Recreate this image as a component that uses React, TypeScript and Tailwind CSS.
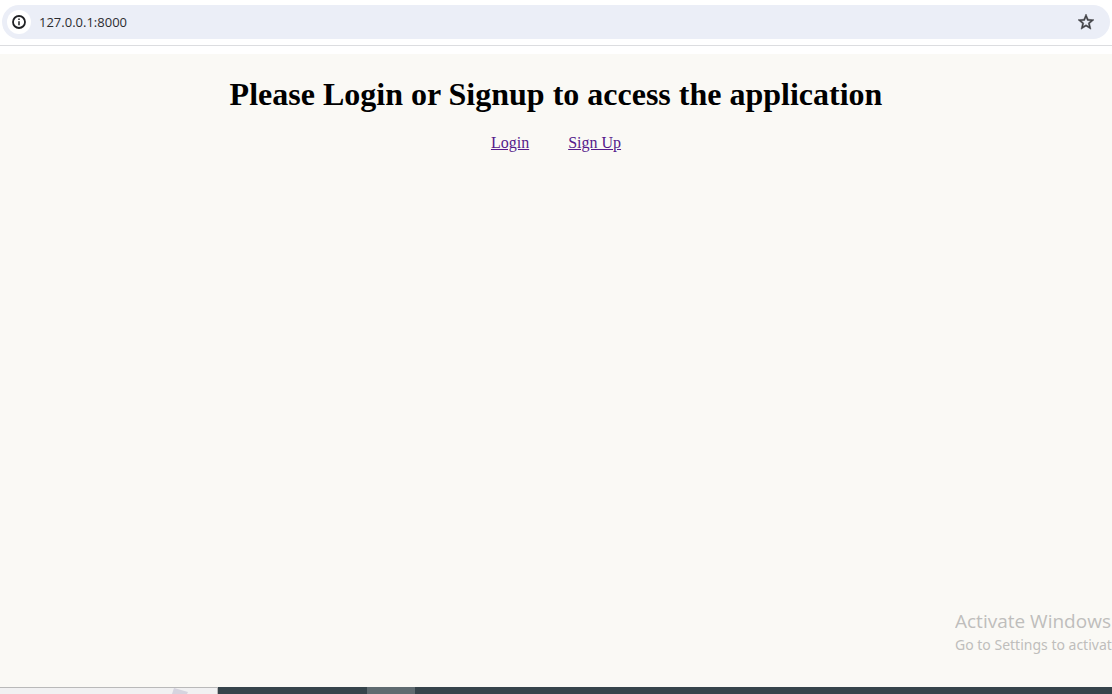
import React from "react";

function AddressBar() {
  return (
    <header className="border-b border-[#dcdde0] bg-white pt-[5px] pb-[6px] pl-[2px] pr-[2px]">
      <div className="flex h-[34px] items-center rounded-full bg-[#ebeef7] pl-[5px] pr-4">
        <button
          type="button"
          aria-label="View site information"
          className="flex size-6 shrink-0 items-center justify-center rounded-full bg-white"
        >
          <svg viewBox="0 0 14 14" className="size-[14px]" fill="none">
            <circle cx="7" cy="7" r="6" stroke="#1f2023" strokeWidth="1.8" />
            <path d="M7 6.2v4M7 3.6v1.5" stroke="#1f2023" strokeWidth="1.5" />
          </svg>
        </button>
        <input
          type="text"
          aria-label="Address"
          defaultValue="127.0.0.1:8000"
          className="ml-2 min-w-0 flex-1 bg-transparent font-['Open_Sans',sans-serif] text-[13px] leading-5 text-[#2b2c30] outline-none"
        />
        <button type="button" aria-label="Bookmark this page" className="shrink-0">
          <svg viewBox="2 2 20 20" className="size-4" fill="#3f4044" stroke="#3f4044" strokeWidth="0.6">
            <path d="M22 9.24l-7.19-.62L12 2 9.19 8.63 2 9.24l5.46 4.73L5.82 21 12 17.27 18.18 21l-1.63-7.03L22 9.24zM12 15.4l-3.76 2.27 1-4.28-3.32-2.88 4.38-.38L12 6.1l1.71 4.04 4.38.38-3.32 2.88 1 4.28L12 15.4z" />
          </svg>
        </button>
      </div>
    </header>
  );
}

function ActivationNotice() {
  return (
    <aside className="flex w-[157px] flex-col self-end overflow-hidden pb-8 whitespace-nowrap text-[#bfbebc]">
      <p className="font-['Open_Sans',sans-serif] text-[19px] leading-7">Activate Windows</p>
      <p className="font-['Noto_Sans',sans-serif] text-[14px] leading-5">Go to Settings to activat</p>
    </aside>
  );
}

function Taskbar() {
  return (
    <footer className="flex h-[7px] bg-[#36444b]">
      <div className="flex w-[218px] justify-end overflow-hidden border-t border-r border-[#b9b9b9] bg-[#f1f1f2] pr-7">
        <svg viewBox="0 0 18 6" className="h-[6px] w-[18px]">
          <path d="M3 0L17 4L16 6H1Z" fill="#d6d4df" />
        </svg>
      </div>
      <div className="ml-[149px] w-12 bg-[#5f6b70]" />
    </footer>
  );
}

export default function App() {
  return (
    <div className="flex min-h-screen flex-col bg-white">
      <AddressBar />
      <main className="mt-2 flex flex-1 flex-col bg-[#faf9f5] font-['Liberation_Serif',serif]">
        <h1 className="pt-[22px] text-center text-[32px] leading-[37px] font-bold text-black">
          Please Login or Signup to access the application
        </h1>
        <nav className="mt-[21px] mb-auto flex justify-center gap-[39px] text-base leading-[18px] text-[#551a8b]">
          <a href="#login" className="underline">Login</a>
          <a href="#signup" className="underline">Sign Up</a>
        </nav>
        <ActivationNotice />
      </main>
      <Taskbar />
    </div>
  );
}
